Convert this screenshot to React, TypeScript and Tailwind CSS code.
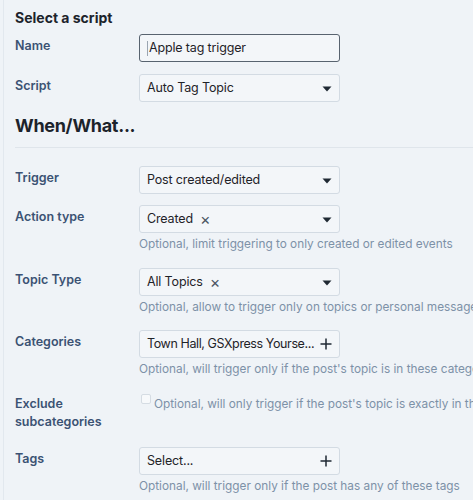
import { ReactNode } from "react";

const font = { fontFamily: "Inter, 'Noto Sans', sans-serif" };

function Caret() {
  return (
    <svg width="10" height="6" viewBox="0 0 10 6" className="ml-auto mt-[2px] shrink-0">
      <path d="M0.5 0.5 L9.5 0.5 L5 5.5 Z" fill="#1f2933" />
    </svg>
  );
}

function Plus() {
  return (
    <svg width="12" height="12" viewBox="0 0 12 12" className="ml-auto shrink-0">
      <path d="M6 0.5 V11.5 M0.5 6 H11.5" stroke="#1f2933" strokeWidth="1.5" />
    </svg>
  );
}

function Select({ children }: { children: ReactNode }) {
  return (
    <div className="flex h-[28px] w-[201px] items-center rounded-[3px] border border-[#d3dbe3] bg-[#f3f6f9] px-[7px] text-[12.5px] tracking-[-0.15px] text-[#1f2328]">
      {children}
    </div>
  );
}

function Tag({ label }: { label: string }) {
  return (
    <span className="flex items-center">
      {label}
      <span className="ml-[7px] text-[16px] leading-none text-[#4b5563]">×</span>
    </span>
  );
}

function Help({ children }: { children: ReactNode }) {
  return (
    <div className="mt-[2px] h-[18px] text-[11.8px] leading-[18px] text-[#7d91a7]">{children}</div>
  );
}

function Row({
  label,
  className,
  children,
}: {
  label: ReactNode;
  className?: string;
  children: ReactNode;
}) {
  return (
    <div className={`flex ${className ?? ""}`}>
      <div className="w-[124px] shrink-0 pt-[3px] text-[12.5px] font-semibold leading-[18px] text-[#3b5273]">
        {label}
      </div>
      <div className="flex flex-col">{children}</div>
    </div>
  );
}

export default function App() {
  return (
    <div className="h-[500px] w-[473px] overflow-hidden whitespace-nowrap bg-[#eff3f7]" style={font}>
      <div className="ml-[3px] h-full border-l border-[#e2e8ee] pl-[11px] pt-[8px]">
        <h2 className="text-[14px] font-bold leading-[20px] text-[#1c232b]">Select a script</h2>

        <Row label="Name" className="mt-[6px]">
          <div className="flex h-[28px] w-[201px] items-center rounded-[3px] border border-[#58636f] bg-[#f3f6f9] px-[7px] text-[12.5px] tracking-[-0.15px] text-[#1f2328]">
            <span className="mr-[1px] h-[15px] w-px bg-[#9aa5b1]" />
            Apple tag trigger
          </div>
        </Row>

        <Row label="Script" className="mt-[12px]">
          <Select>
            Auto Tag Topic
            <Caret />
          </Select>
        </Row>

        <h2 className="mt-[12px] text-[18px] font-bold leading-[24px] tracking-[-0.3px] text-[#1c232b]">
          When/What...
        </h2>
        <div className="mt-[9px] border-t border-[#dfe5eb]" />

        <Row label="Trigger" className="mt-[18px]">
          <Select>
            Post created/edited
            <Caret />
          </Select>
        </Row>

        <Row label="Action type" className="mt-[11px]">
          <Select>
            <Tag label="Created" />
            <Caret />
          </Select>
          <Help>Optional, limit triggering to only created or edited events</Help>
        </Row>

        <Row label="Topic Type" className="mt-[15px]">
          <Select>
            <Tag label="All Topics" />
            <Caret />
          </Select>
          <Help>Optional, allow to trigger only on topics or personal message</Help>
        </Row>

        <Row label="Categories" className="mt-[14px]">
          <Select>
            <span className="tracking-[-0.4px]">Town Hall, GSXpress Yourse...</span>
            <Plus />
          </Select>
          <Help>Optional, will trigger only if the post's topic is in these categories</Help>
        </Row>

        <div className="mt-[17px] flex">
          <div className="w-[124px] shrink-0 text-[12.5px] font-semibold leading-[18px] text-[#3b5273]">
            Exclude
            <br />
            subcategories
          </div>
          <div className="flex items-start text-[11.8px] leading-[18px] text-[#7d91a7]">
            <span className="ml-[2px] mt-[-1px] h-[10px] w-[10px] shrink-0 rounded-[2px] border border-[#d5dce3] bg-[#f7f9fb]" />
            <span className="ml-[3px]">Optional, will only trigger if the post's topic is exactly in this category</span>
          </div>
        </div>

        <Row label="Tags" className="mt-[16px]">
          <Select>
            Select...
            <Plus />
          </Select>
          <Help>Optional, will trigger only if the post has any of these tags</Help>
        </Row>
      </div>
    </div>
  );
}
